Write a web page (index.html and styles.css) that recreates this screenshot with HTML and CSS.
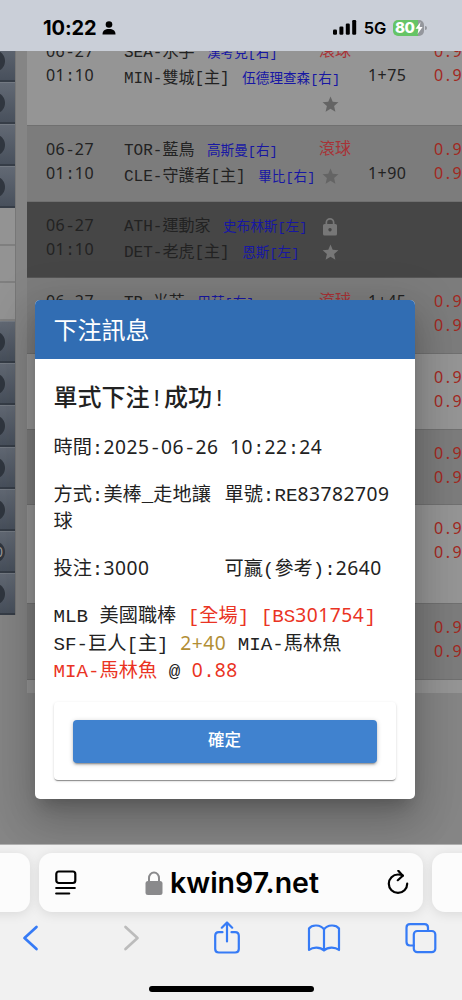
FILE: index.html
```html
<!DOCTYPE html>
<html lang="zh-Hant">
<head>
    <meta charset="UTF-8">
    <meta name="viewport" content="width=device-width, initial-scale=1.0">
    <title>下注訊息</title>
    <link rel="stylesheet" href="styles.css">
</head>
<body>
    <!-- Status bar -->
    <header class="status-bar">
        <div class="clock">
            <span>10:22</span>
            <svg width="14" height="14" viewBox="0 0 14 14"><circle cx="7" cy="3.5" r="3.3"/><path d="M.5 13.5c0-4 2.500-5.500 6.500-5.500s6.500 1.500 6.500 5.500z"/></svg>
        </div>
        <div class="signal">
            <svg width="24" height="15" viewBox="0 0 24 15"><rect x="0" y="9.500" width="4" height="5.300" rx="1.200"/><rect x="6.400" y="6.500" width="4" height="8.300" rx="1.200"/><rect x="12.800" y="3.500" width="4" height="11.300" rx="1.200"/><rect x="19.200" y="0" width="4" height="14.800" rx="1.200"/></svg>
            <span class="network">5G</span>
            <div class="battery"><span>80</span><svg width="8" height="12" viewBox="0 0 8 12"><path d="M5.500 0 .5 6.800h3L2.600 12l5-7h-3z" fill="#fff"/></svg></div>
        </div>
    </header>

    <main class="page">
        <nav class="side">
            <div class="side-item"></div>
            <div class="side-item"></div>
            <div class="side-item"></div>
            <div class="side-item"></div>
            <div class="side-sub"></div>
            <div class="side-sub"></div>
            <div class="side-sub"></div>
            <div class="side-item"></div>
            <div class="side-item"></div>
            <div class="side-item"></div>
            <div class="side-item"></div>
            <div class="side-item"></div>
            <div class="side-item"><span>0</span></div>
            <div class="side-item"></div>
        </nav>

        <section class="games">
            <div class="game light tall">
                <div class="date"><span class="num">06</span>-<span class="num">27</span><br><span class="num">01</span>:<span class="num">10</span></div>
                <div class="teams">SEA-水手 <small>漢考克[右]</small><br>MIN-雙城[主] <small>伍德理查森[右]</small></div>
                <div class="state low">
                    <span class="live">滾球</span>
                    <svg class="star" viewBox="0 0 24 24"><path d="M12 17.270 18.180 21l-1.640-7.030L22 9.240l-7.190-.61L12 2 9.190 8.630 2 9.240l5.460 4.730L5.820 21z"/></svg>
                </div>
                <div class="num"><br>1+75</div>
                <div class="num odds">0.9<br>0.9</div>
            </div>
            <div class="game dark">
                <div class="date"><span class="num">06</span>-<span class="num">27</span><br><span class="num">01</span>:<span class="num">10</span></div>
                <div class="teams">TOR-藍鳥 <small>高斯曼[右]</small><br>CLE-守護者[主] <small>畢比[右]</small></div>
                <div class="state">
                    <span class="live">滾球</span>
                    <svg class="star" viewBox="0 0 24 24"><path d="M12 17.270 18.180 21l-1.640-7.030L22 9.240l-7.190-.61L12 2 9.190 8.630 2 9.240l5.460 4.730L5.820 21z"/></svg>
                </div>
                <div class="num"><br>1+90</div>
                <div class="num odds">0.9<br>0.9</div>
            </div>
            <div class="game closed">
                <div class="date"><span class="num">06</span>-<span class="num">27</span><br><span class="num">01</span>:<span class="num">10</span></div>
                <div class="teams">ATH-運動家 <small>史布林斯[左]</small><br>DET-老虎[主] <small>恩斯[左]</small></div>
                <div class="state">
                    <svg class="lock" viewBox="0 0 14 18"><path fill-rule="evenodd" d="M2.500 6V4.500a4.500 4.500 0 0 1 9 0V6H12.500Q14 6 14 7.500V16Q14 17.500 12.500 17.500H1.500Q0 17.500 0 16V7.500Q0 6 1.500 6zM4.200 6h5.600V4.500a2.800 2.800 0 0 0-5.600 0zM7 10a1.700 1.700 0 1 0 .01 0z"/></svg>
                    <svg class="star" viewBox="0 0 24 24"><path d="M12 17.270 18.180 21l-1.640-7.030L22 9.240l-7.190-.61L12 2 9.190 8.630 2 9.240l5.460 4.730L5.820 21z"/></svg>
                </div>
            </div>
            <div class="game dark">
                <div class="date"><span class="num">06</span>-<span class="num">27</span></div>
                <div class="teams">TB-光芒 <small>巴茲[右]</small></div>
                <div class="state"><span class="live">滾球</span></div>
                <div class="num">1+45</div>
                <div class="num odds">0.9<br>0.9</div>
            </div>
            <div class="game light">
                <div class="num odds">0.9<br>0.9</div>
            </div>
            <div class="game dark">
                <div class="num odds">0.9<br>0.9</div>
            </div>
            <div class="game light tall">
                <div class="num odds">0.9<br>0.9</div>
            </div>
            <div class="game dark">
                <div class="num odds">0.9<br>0.9</div>
            </div>
            <div class="game light last"></div>
        </section>

        <!-- Bet message -->
        <div class="overlay">
            <div class="dialog">
                <h2 class="dialog-title">下注訊息</h2>
                <div class="dialog-body">
                    <h3>單式下注!成功!</h3>
                    <p>時間:<span class="num">2025</span>-<span class="num">06</span>-<span class="num">26</span> <span class="num">10</span>:<span class="num">22</span>:<span class="num">24</span></p>
                    <div class="cols">
                        <p>方式:美棒_走地讓球</p>
                        <p>單號:RE<span class="num">83782709</span></p>
                    </div>
                    <div class="cols">
                        <p>投注:<span class="num">3000</span></p>
                        <p>可贏(參考):<span class="num">2640</span></p>
                    </div>
                    <p class="bet">MLB 美國職棒 <span class="red">[全場] [BS<span class="num">301754</span>]</span><br>SF-巨人[主] <span class="num gold">2+40</span> MIA-馬林魚<br><span class="red">MIA-馬林魚</span> @ <span class="red"><span class="num">0</span>.<span class="num">88</span></span></p>
                    <div class="actions">
                        <button type="button">確定</button>
                    </div>
                </div>
            </div>
        </div>
    </main>

    <!-- Browser bar -->
    <footer class="browser">
        <div class="tabs">
            <div class="tab"></div>
            <div class="tab address">
                <svg width="22" height="26" viewBox="0 0 22 26" fill="none" stroke="#000" stroke-width="2.200" stroke-linecap="round"><rect x="1.300" y="1.500" width="19" height="11.500" rx="2.500"/><path d="M1.200 18h18.600M1.200 23.500h13"/></svg>
                <div class="url">
                    <svg width="18" height="24" viewBox="0 0 18 24"><rect x=".5" y="10" width="17" height="14" rx="2.500" fill="#8a8a8c"/><path d="M4 11V7a5 5.500 0 0 1 10 0v4" fill="none" stroke="#8a8a8c" stroke-width="2"/></svg>
                    <span>kwin97.net</span>
                </div>
                <svg width="22" height="26" viewBox="0 0 22 26" fill="none" stroke="#000" stroke-width="2.200" stroke-linecap="round" stroke-linejoin="round"><path d="M20.200 13.700A9.200 9.200 0 1 1 11 4.500c2 0 3.500.3 4.800 1"/><path d="M11.300.8l4.500 4.900-5 4.500"/></svg>
            </div>
            <div class="tab"></div>
        </div>
        <div class="toolbar">
            <svg width="34" height="34" viewBox="0 0 34 34"><path d="M22.500 6 10.500 17l12 11" stroke-width="2.700"/></svg>
            <svg class="off" width="34" height="34" viewBox="0 0 34 34"><path d="M13.500 6l12 11-12 11" stroke-width="2.700"/></svg>
            <svg width="34" height="34" viewBox="0 0 34 34"><path d="M13.500 11.200H9.800Q6.200 11.200 6.200 14.800V28Q6.200 31.500 9.800 31.500H26.200Q29.800 31.500 29.800 28V14.800Q29.800 11.200 26.200 11.200H22.500M18 20.500V1.700M12.800 6.700 18 1.500l5.200 5.200"/></svg>
            <svg width="34" height="34" viewBox="0 0 34 34"><path d="M17 8.300C13.500 3.500 5 3.300 2 7.500V29c4-3.200 11-3.200 15 .5 4-3.700 11-3.700 15-.5V7.500C29 3.300 20.500 3.500 17 8.300zV29"/></svg>
            <svg width="34" height="34" viewBox="0 0 34 34"><rect x="9.800" y="10" width="21.500" height="21.200" rx="3.500"/><path d="M9.800 24.500H6Q2.500 24.500 2.500 21V6.700Q2.500 3.200 6 3.200H20.500Q24 3.200 24 6.700V10"/></svg>
        </div>
        <div class="home-line"></div>
    </footer>
</body>
</html>
```
FILE: styles.css
```css
* {
    box-sizing: border-box;
}
body {
    margin: 0;
    width: 462px;
    height: 1000px;
    display: flex;
    flex-direction: column;
    overflow: hidden;
    font-family: "Liberation Mono", "Noto Sans CJK TC", monospace;
    color: #222;
}
svg {
    display: block;
    flex-shrink: 0;
}
h2, h3, p {
    margin: 0;
}

/* status bar */
.status-bar {
    height: 51px;
    flex-shrink: 0;
    padding: 4px 38px 0 43px;
    display: flex;
    align-items: center;
    justify-content: space-between;
    background: #cacfd8;
    color: #000;
    font-family: Inter, sans-serif;
}
.clock, .signal {
    display: flex;
    align-items: center;
}
.clock {
    gap: 5px;
    font-size: 20px;
    font-weight: 700;
    letter-spacing: -0.1px;
}
.network {
    margin: 1px 7px 0 7px;
    font-size: 16.5px;
    font-weight: 600;
    letter-spacing: -0.3px;
}
.battery {
    position: relative;
    width: 31px;
    height: 16px;
    border-radius: 5px;
    display: flex;
    align-items: center;
    padding-left: 2px;
    background: linear-gradient(90deg, #65c466 25px, #94979d 25px);
    color: #fff;
    font-size: 15px;
    font-weight: 800;
    letter-spacing: -0.4px;
}
.battery::after {
    content: "";
    position: absolute;
    right: -3px;
    top: 6px;
    width: 2px;
    height: 4px;
    border-radius: 0 2px 2px 0;
    background: #94979d;
}

/* page */
.page {
    position: relative;
    height: 793px;
    flex-shrink: 0;
    display: flex;
    align-items: flex-start;
    gap: 11.5px;
    overflow: hidden;
    background: #858585;
}
.side {
    width: 15.5px;
    flex-shrink: 0;
    margin-top: -11px;
    border-right: 1px solid #777;
}
.side-item {
    height: 42px;
    display: flex;
    align-items: center;
    overflow: hidden;
    border-top: 1px solid #737982;
    border-bottom: 2px solid #363d47;
    background: radial-gradient(circle at -6px 20px, #30363f 10.5px, transparent 11.5px), linear-gradient(#626974, #48505c);
}
.side-item span {
    margin-left: -5px;
    font: 14px "Noto Sans", sans-serif;
    color: #999;
}
.side-sub {
    height: 37.6px;
    border-bottom: 2px solid #7f7f7f;
    background: #939393;
}
.games {
    width: 435px;
    flex-shrink: 0;
    margin-top: -23.2px;
    font-size: 16px;
    line-height: 24px;
}
.game {
    height: 75.8px;
    padding: 11px 0 0 19px;
    display: grid;
    grid-template-columns: 78px 195px 49px 66px 28px;
    border-bottom: 1.5px solid #707070;
}
.game.tall {
    height: 98.5px;
}
.game.last {
    height: 13px;
    border: 0;
}
.light {
    background: #959595;
}
.dark {
    background: #7c7c7c;
}
.closed {
    background: #464646;
    border-color: #555;
}
.num {
    font-family: "Noto Sans", sans-serif;
    letter-spacing: 0.028em;
}
.game .num {
    white-space: nowrap;
}
.date {
    padding-top: 2px;
}
.game .date .num {
    line-height: 1;
}
.game .odds {
    grid-column: 5;
    color: #a2281f;
    letter-spacing: 0.16em;
}
.teams {
    padding-top: 2px;
    line-height: 25.8px;
    white-space: nowrap;
}
.teams small {
    margin-left: 3px;
    font-size: 13.6px;
    color: #1717a3;
}
.state {
    display: flex;
    flex-direction: column;
    gap: 6px;
    padding-top: 1px;
}
.state.low {
    gap: 32px;
}
.live {
    height: 22px;
    line-height: 24px;
    color: #a83236;
}
.star {
    width: 19px;
    height: 19px;
    margin: 1px 0 0 1.5px;
    fill: #646464;
}
.lock {
    width: 14px;
    height: 18px;
    margin: 4px 0 0 4px;
    fill: #777;
}
.closed .star {
    fill: #777;
}

/* dialog */
.overlay {
    position: absolute;
    inset: 0;
    display: flex;
    align-items: flex-end;
    justify-content: center;
    padding: 0 13px 45px 0;
}
.dialog {
    width: 380px;
    height: 499.5px;
    border-radius: 5px;
    overflow: hidden;
    background: #fff;
    box-shadow: 0 11px 15px -7px rgba(0, 0, 0, .2), 0 24px 38px 3px rgba(0, 0, 0, .14), 0 9px 46px 8px rgba(0, 0, 0, .12);
}
.dialog-title {
    height: 59.5px;
    padding-left: 19px;
    background: #316db3;
    color: #fff;
    font-size: 24px;
    font-weight: 400;
    line-height: 65px;
}
.dialog-body {
    padding: 23.5px 19px 19px;
    font-size: 19.2px;
    line-height: 27.5px;
}
.dialog-body h3 {
    margin-bottom: 19.5px;
    font-size: 24px;
    font-weight: 500;
    line-height: 34px;
}
.dialog-body p {
    margin-bottom: 19.4px;
}
.dialog-body .num {
    line-height: 1;
}
.cols {
    display: grid;
    grid-template-columns: 1fr 1fr;
}
.cols p {
    white-space: normal;
    word-break: break-all;
}
.dialog-body .bet {
    margin-bottom: 15px;
    white-space: nowrap;
}
.red {
    color: #ea3323;
}
.gold {
    color: #b28e35;
}
.actions {
    height: 78px;
    padding: 18px 19px;
    border-radius: 4px;
    box-shadow: 0 2px 1px -1px rgba(0, 0, 0, .3), 0 1px 1px rgba(0, 0, 0, .14), 0 1px 3px rgba(0, 0, 0, .14);
}
button {
    display: block;
    width: 100%;
    height: 43px;
    padding: 0 0 4px;
    border: 0;
    border-radius: 4px;
    background: #4082cf;
    color: #fff;
    font: 500 16.5px "Noto Sans CJK TC", sans-serif;
    box-shadow: 0 3px 1px -2px rgba(0, 0, 0, .2), 0 2px 2px rgba(0, 0, 0, .14), 0 1px 5px rgba(0, 0, 0, .2);
}

/* browser bar */
.browser {
    flex: 1;
    display: flex;
    flex-direction: column;
    align-items: center;
    overflow: hidden;
    border-top: 1px solid #b0b0b0;
    background: #f1f1f1;
    font-family: Inter, sans-serif;
}
.tabs {
    display: flex;
    gap: 9px;
    padding-top: 8px;
}
.tab {
    width: 384px;
    height: 59px;
    flex-shrink: 0;
    border-radius: 13px;
    background: #fcfcfc;
    box-shadow: 0 2px 12px rgba(0, 0, 0, .1);
}
.address {
    display: flex;
    align-items: center;
    justify-content: space-between;
    padding: 0 14px 0 16px;
}
.url {
    display: flex;
    align-items: center;
    gap: 7px;
    color: #000;
    font-size: 28.5px;
    font-weight: 600;
    letter-spacing: 0;
}
.toolbar {
    width: 100%;
    display: flex;
    justify-content: space-between;
    padding: 9px 24px 0 14px;
}
.toolbar svg {
    fill: none;
    stroke: #367bf6;
    stroke-width: 2.2;
    stroke-linecap: round;
    stroke-linejoin: round;
}
.toolbar .off {
    stroke: #bcbcbc;
}
.home-line {
    width: 165px;
    height: 5.5px;
    margin-top: 31px;
    border-radius: 3px;
    background: #000;
}
```
